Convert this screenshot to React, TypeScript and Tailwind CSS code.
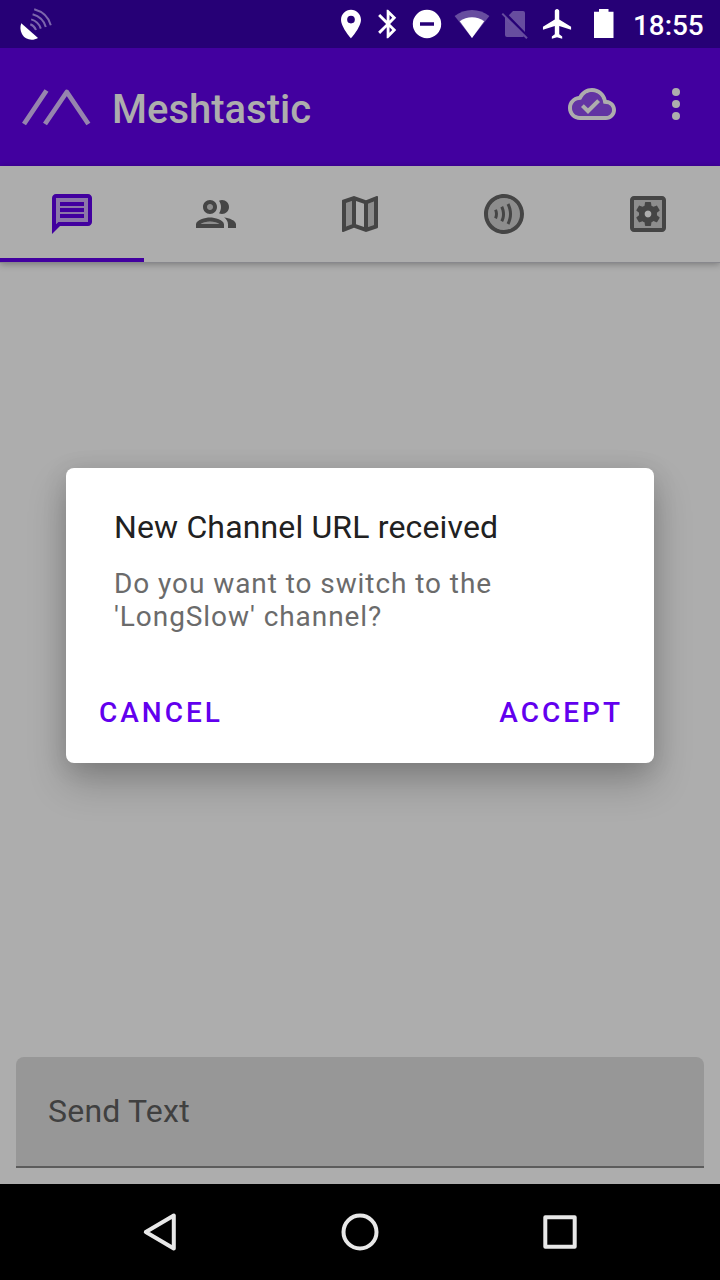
import type { ReactNode } from "react";

type GlyphProps = { children: ReactNode; className?: string; viewBox?: string };

function Glyph({ children, className = "size-12", viewBox = "0 0 24 24" }: GlyphProps) {
  return (
    <svg className={`shrink-0 ${className}`} viewBox={viewBox} fill="currentColor">
      {children}
    </svg>
  );
}

function StatusBar() {
  return (
    <header className="flex h-12 shrink-0 items-center justify-between bg-[#260076] text-white">
      <Glyph className="ml-4 h-12 w-10" viewBox="16 0 40 48">
        <path d="M21.3 23.2 L38 37.9 C32 41.5 25 39.5 22 34 C20 30.2 20 26.2 21.3 23.2Z" />
        <g fill="none" stroke="currentColor" strokeOpacity=".4" strokeWidth="2">
          <path d="M30.3 24.2 Q34.5 25.8 36 30" />
          <path d="M31.2 19.4 Q38.6 21.6 40.8 28.6" />
          <path d="M32.6 14.3 Q43 17.2 45.8 27" />
          <path d="M34.2 9.3 Q47.5 13 50.8 25.2" />
        </g>
      </Glyph>
      <div className="flex items-center">
        <Glyph className="h-12 w-[290px]" viewBox="330 0 290 48">
          <path transform="translate(333.9 6.8) scale(1.425)" d="M12 2C8.13 2 5 5.13 5 9c0 5.25 7 13 7 13s7-7.75 7-13c0-3.87-3.13-7-7-7zm0 9.7a2.7 2.7 0 1 1 0-5.4 2.7 2.7 0 0 1 0 5.4z" />
          <path transform="translate(371 6.8) scale(1.425)" d="M17.71 7.71L12 2h-1v7.59L6.41 5 5 6.41 10.59 12 5 17.59 6.41 19 11 14.41V22h1l5.71-5.71-4.3-4.29 4.3-4.29zM13 5.83l1.88 1.88L13 9.59V5.83zm1.88 10.46L13 18.17v-3.76l1.88 1.88z" />
          <path fillRule="evenodd" d="M427 9.8a14.2 14.2 0 1 0 0 28.4 14.2 14.2 0 0 0 0-28.4zM420 22.3h14v3.4h-14z" />
          <path fillOpacity=".3" d="M454.6 16C464.5 8 479.5 8 489.4 16L472 38z" />
          <path d="M459.8 21.2C466.8 15.8 477.2 15.8 484.2 21.2L472 38z" />
          <path fillOpacity=".3" d="M513 11H523a2 2 0 0 1 2 2v19L508.8 15.2zM505 17.6 523.8 36.4 522.8 37H507a2 2 0 0 1-2-2z" />
          <path d="M502.3 13.6 527 38.3" fill="none" stroke="currentColor" strokeOpacity=".3" strokeWidth="2" />
          <path transform="translate(540 6.1) scale(1.48)" d="M21 16v-2l-8-5V3.5c0-.83-.67-1.5-1.5-1.5S10 2.67 10 3.5V9l-8 5v2l8-2.5V19l-2 1.5V22l3.5-1 3.5 1v-1.5L13 19v-5.5l8 2.5z" />
          <path d="M599 9h9.5v2.8h5V38H594V11.8h5z" />
        </Glyph>
        <time className="w-[100px] pt-1 pl-[13px] text-[28px] leading-none font-medium tracking-[-0.1px]">18:55</time>
      </div>
    </header>
  );
}

function AppBar() {
  return (
    <div className="flex h-[118px] shrink-0 items-center bg-[#42009f] text-[#adadad]">
      <svg className="ml-5 h-12 w-18 shrink-0" viewBox="20 83 72 48" fill="none" stroke="#9684ae" strokeWidth="4.8" strokeLinejoin="round">
        <path d="M24 124 46.5 90.5M45 124 66.8 92 88.4 124" />
      </svg>
      <h1 className="ml-5 pt-1.5 text-[40px] leading-none font-medium">Meshtastic</h1>
      <div className="mr-5 mb-1.5 ml-auto flex items-center gap-9">
        <Glyph>
          <path fillOpacity=".3" d="M19.21 12.04l-1.53-.11-.3-1.5C16.88 7.86 14.62 6 12 6 9.94 6 8.08 7.14 7.12 8.96l-.5.95-1.07.11C3.53 10.24 2 11.95 2 14c0 2.21 1.79 4 4 4h13c1.65 0 3-1.35 3-3 0-1.55-1.22-2.86-2.79-2.96z" />
          <path d="M19.35 10.04C18.67 6.59 15.64 4 12 4 9.11 4 6.61 5.64 5.36 8.04 2.35 8.36 0 10.9 0 14c0 3.31 2.69 6 6 6h13c2.76 0 5-2.24 5-5 0-2.64-2.05-4.78-4.65-4.96zM19 18H6c-2.21 0-4-1.79-4-4 0-2.05 1.53-3.76 3.56-3.97l1.07-.11.5-.95C8.08 7.14 9.94 6 12 6c2.62 0 4.88 1.86 5.39 4.43l.3 1.5 1.53.11c1.56.1 2.78 1.41 2.78 2.96 0 1.65-1.35 3-3 3zM10 14.18l-2.09-2.09L6.5 13.5 10 17l6.01-6.01-1.41-1.41z" />
        </Glyph>
        <Glyph>
          <circle cx="12" cy="6" r="2" />
          <circle cx="12" cy="12" r="2" />
          <circle cx="12" cy="18" r="2" />
        </Glyph>
      </div>
    </div>
  );
}

const tabs: { name: string; icon: ReactNode }[] = [
  {
    name: "Messages",
    icon: (
      <>
        <path fillOpacity=".3" d="M4 17.17L5.17 16H20V4H4v13.17z" />
        <path d="M20 2H4c-1.1 0-1.99.9-1.99 2L2 22l4-4h14c1.1 0 2-.9 2-2V4c0-1.1-.9-2-2-2zm0 14H5.17L4 17.17V4h16v12zM6 12h12v2H6zm0-3h12v2H6zm0-3h12v2H6z" />
      </>
    ),
  },
  {
    name: "Users",
    icon: (
      <>
        <path fillOpacity=".3" d="M9 10a1.5 1.5 0 1 0 0-3 1.5 1.5 0 0 0 0 3zM9 15.75c-1.79 0-3.82.67-4.66 1.25h9.32c-.84-.58-2.87-1.25-4.66-1.25z" />
        <path d="M9 13.75c-2.34 0-7 1.17-7 3.5V19h14v-1.75c0-2.33-4.66-3.5-7-3.5zM4.34 17c.84-.58 2.87-1.25 4.66-1.25s3.82.67 4.66 1.25H4.34zM9 12c1.93 0 3.5-1.57 3.5-3.5S10.93 5 9 5 5.5 6.57 5.5 8.5 7.07 12 9 12zm0-5c.83 0 1.5.67 1.5 1.5S9.83 10 9 10s-1.5-.67-1.5-1.5S8.17 7 9 7zm7.04 6.81c1.16.84 1.96 1.96 1.96 3.44V19h4v-1.75c0-2.02-3.5-3.17-5.96-3.44zM15 12c1.93 0 3.5-1.57 3.5-3.5S16.93 5 15 5c-.54 0-1.04.13-1.5.35.63.89 1 1.98 1 3.15s-.37 2.26-1 3.15c.46.22.96.35 1.5.35z" />
      </>
    ),
  },
  {
    name: "Map",
    icon: (
      <>
        <path fillOpacity=".3" d="M5 18.31l3-1.16V5.45L5 6.46zM16 18.55l3-1.01V5.7l-3 1.16z" />
        <path d="M20.5 3l-.16.03L15 5.1 9 3 3.36 4.9c-.21.07-.36.25-.36.48V20.5c0 .28.22.5.5.5l.16-.03L9 18.9l6 2.1 5.64-1.9c.21-.07.36-.25.36-.48V3.5c0-.28-.22-.5-.5-.5zM8 17.15l-3 1.16V6.46l3-1.01v11.7zm6 1.38l-4-1.4V5.47l4 1.4v11.66zm5-.99l-3 1.01V6.86l3-1.16v11.84z" />
      </>
    ),
  },
  {
    name: "Channel",
    icon: (
      <>
        <circle cx="12" cy="12" r="8" fillOpacity=".3" />
        <path d="M12 2C6.48 2 2 6.48 2 12s4.48 10 10 10 10-4.48 10-10S17.52 2 12 2zm0 18c-4.42 0-8-3.58-8-8s3.58-8 8-8 8 3.58 8 8-3.58 8-8 8z" />
        <path d="M7.1 10.18c.26.56.39 1.16.4 1.8.01.63-.13 1.25-.4 1.86l1.37.6c.35-.81.52-1.63.51-2.46-.01-.84-.19-1.65-.54-2.41l-1.34.61zM13.33 7.33c.78 1.57 1.18 3.14 1.18 4.64 0 1.51-.4 3.09-1.18 4.69l1.35.66c.88-1.81 1.33-3.61 1.33-5.35 0-1.74-.45-3.52-1.33-5.3l-1.35.66zM10.2 8.72c.53 1.07.8 2.21.8 3.4 0 1.17-.26 2.23-.78 3.15l1.3.74c.65-1.15.98-2.45.98-3.89 0-1.42-.32-2.79-.96-4.07l-1.34.67z" />
      </>
    ),
  },
  {
    name: "Settings",
    icon: (
      <>
        <path fillOpacity=".3" fillRule="evenodd" d="M5 5h14v14H5zM12 10.29a1.71 1.71 0 1 0 0 3.42 1.71 1.71 0 0 0 0-3.42z" />
        <path d="M19 3H5c-1.11 0-2 .9-2 2v14c0 1.1.89 2 2 2h14c1.11 0 2-.9 2-2V5c0-1.1-.89-2-2-2zm0 16H5V5h14v14z" />
        <path fillRule="evenodd" d="M6.21 13.97l1.2 2.07c.08.13.23.18.37.13l1.49-.6c.31.24.64.44 1.01.59l.22 1.59c.03.14.15.25.3.25h2.4c.15 0 .27-.11.3-.26l.22-1.59c.36-.15.7-.35 1.01-.59l1.49.6c.14.05.29 0 .37-.13l1.2-2.07c.08-.13.04-.29-.07-.39l-1.27-.99c.03-.19.04-.39.04-.58 0-.2-.02-.39-.04-.59l1.27-.99c.11-.09.15-.26.07-.39l-1.2-2.07c-.08-.13-.23-.18-.37-.13l-1.49.6c-.31-.24-.64-.44-1.01-.59l-.22-1.59c-.03-.14-.15-.25-.3-.25h-2.4c-.15 0-.27.11-.3.26l-.22 1.59c-.36.15-.71.34-1.01.58l-1.49-.6c-.14-.05-.29 0-.37.13l-1.2 2.07c-.08.13-.04.29.07.39l1.27.99c-.03.2-.05.39-.05.59 0 .2.02.39.04.59l-1.27.99c-.11.1-.14.26-.06.39zM12 10.29c.94 0 1.71.77 1.71 1.71s-.77 1.71-1.71 1.71-1.71-.77-1.71-1.71.77-1.71 1.71-1.71z" />
      </>
    ),
  },
];

function TabBar() {
  return (
    <nav className="grid h-24 shrink-0 grid-cols-5 bg-[#adadad] shadow-[0_1px_0_#88888d,0_2px_7px_rgba(0,0,0,0.32)]">
      {tabs.map((tab, i) => (
        <button
          key={tab.name}
          className={
            i === 0
              ? "flex items-center justify-center border-b-4 border-[#42009f] pt-1 text-[#42009f]"
              : "flex items-center justify-center text-[#454545]"
          }
        >
          <Glyph>{tab.icon}</Glyph>
        </button>
      ))}
    </nav>
  );
}

function ChannelDialog() {
  return (
    <div className="absolute inset-x-[66px] top-[468px] flex h-[295px] flex-col rounded-lg bg-white shadow-[0_20px_38px_rgba(0,0,0,0.22),0_4px_24px_rgba(0,0,0,0.12)]">
      <h2 className="px-12 pt-10 text-[32px] leading-[38px] tracking-[0.15px] text-[#212121]">New Channel URL received</h2>
      <p className="px-12 pt-[21px] text-[28px] leading-[33px] tracking-[0.93px] text-[#6b6b6b]">
        Do you want to switch to the
        <br />
        'LongSlow' channel?
      </p>
      <div className="mt-auto flex justify-between pr-8 pb-[34px] pl-[33px] text-[28px] leading-[33px] font-medium tracking-[3px] text-[#6200ee]">
        <button>CANCEL</button>
        <button className="-mr-px">ACCEPT</button>
      </div>
    </div>
  );
}

function NavigationBar() {
  return (
    <footer className="flex h-24 shrink-0 items-center justify-center gap-[152px] bg-black text-[#e8e8e8]">
      <svg className="size-12" viewBox="0 0 48 48" fill="none" stroke="currentColor" strokeWidth="4" strokeLinejoin="round">
        <path d="M10 24 38 7.5V40.5Z" transform="translate(-.2 0)" />
      </svg>
      <svg className="size-12" viewBox="0 0 48 48" fill="none" stroke="currentColor" strokeWidth="4">
        <circle cx="24" cy="24" r="16.5" />
      </svg>
      <svg className="size-12" viewBox="0 0 48 48" fill="none" stroke="currentColor" strokeWidth="4" strokeLinejoin="round">
        <path d="M9.3 9.3h29.4v29.4H9.3z" />
      </svg>
    </footer>
  );
}

export default function App() {
  return (
    <main className="relative flex h-[1280px] w-[720px] flex-col overflow-hidden bg-[#adadad] font-['Roboto',sans-serif]">
      <StatusBar />
      <AppBar />
      <TabBar />
      <section className="flex flex-1 flex-col justify-end p-4">
        <div className="flex h-[111px] items-center rounded-t-lg border-b-2 border-[#5c5c5c] bg-[#979797] px-8 pb-0.5 text-[32px] leading-none tracking-[0.22px] text-[#404040]">
          Send Text
        </div>
      </section>
      <NavigationBar />
      <ChannelDialog />
    </main>
  );
}
